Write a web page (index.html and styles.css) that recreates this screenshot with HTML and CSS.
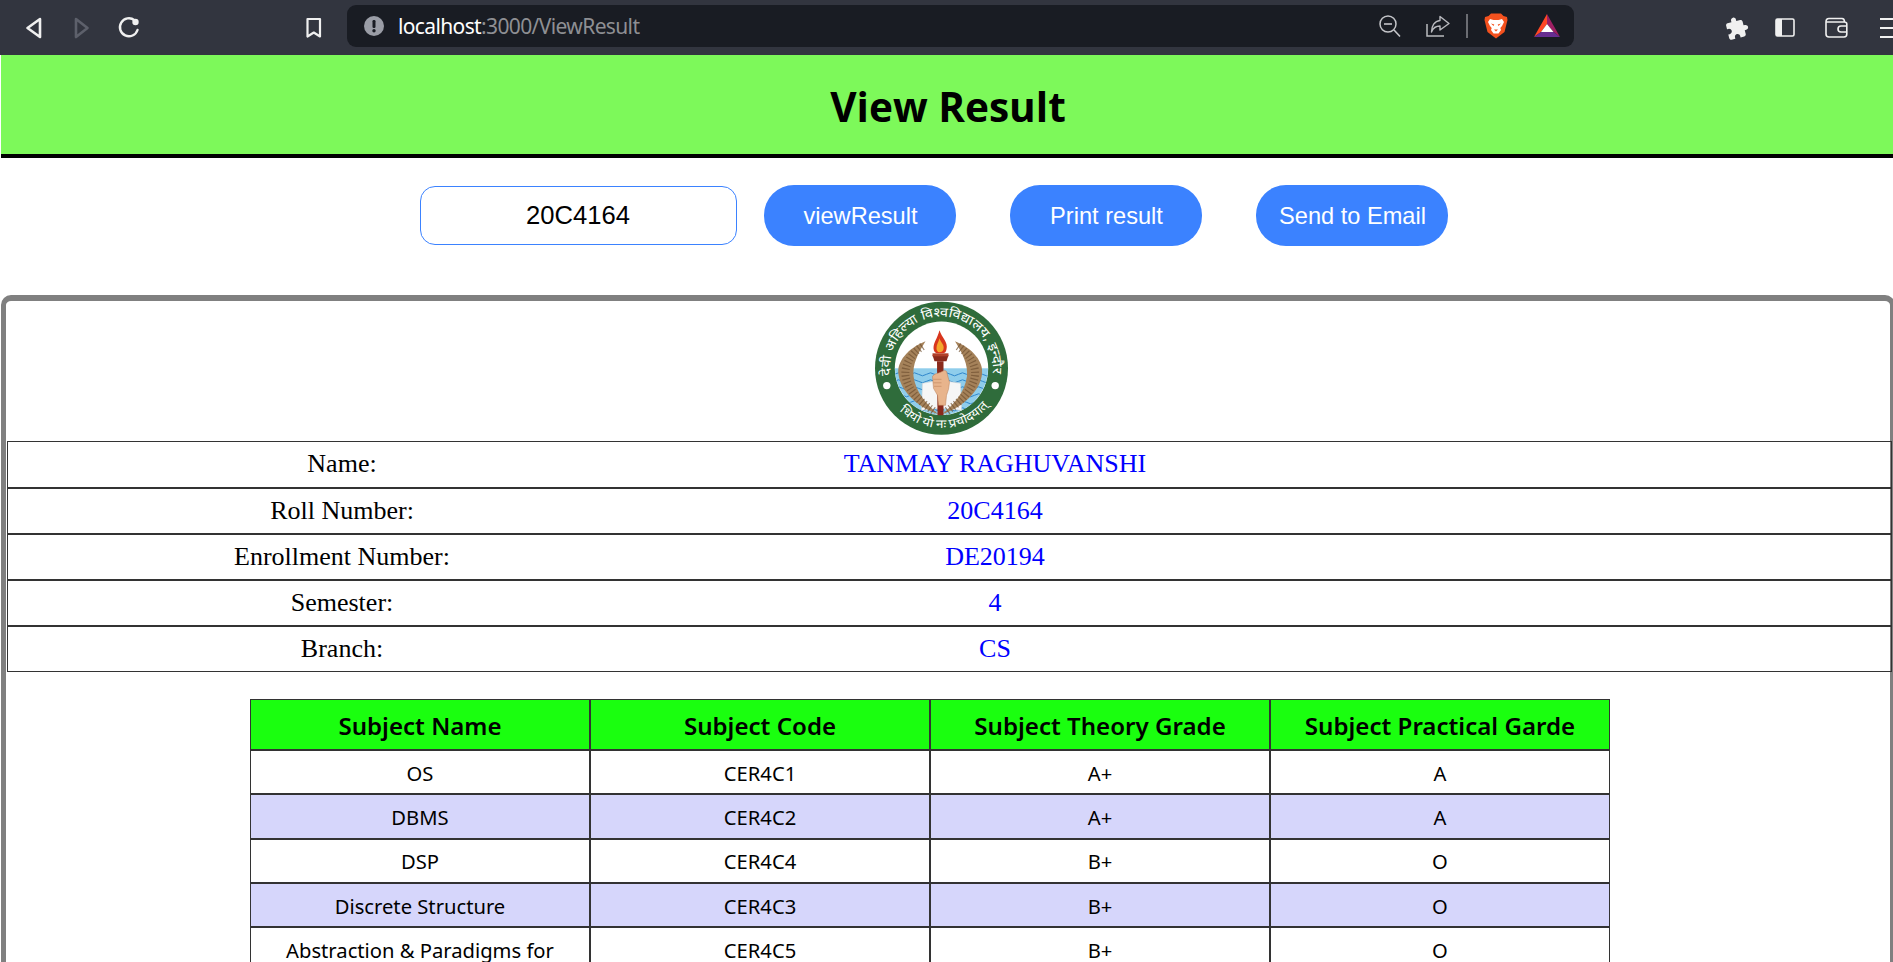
FILE: index.html
```html
<!DOCTYPE html>
<html lang="en">
<head>
<meta charset="utf-8">
<title>View Result</title>
<link rel="stylesheet" href="styles.css">
</head>
<body>
<div class="toolbar">
  <svg class="icon back" width="18" height="24" viewBox="0 0 18 24"><path d="M15 3 L2.500 12 L15 21 Z" fill="none" stroke="#f0f0f0" stroke-width="2.600" stroke-linejoin="round"/></svg>
  <svg class="icon forward" width="18" height="24" viewBox="0 0 18 24"><path d="M3 3 L14.500 12 L3 21 Z" fill="none" stroke="#5d606b" stroke-width="2.600" stroke-linejoin="round"/></svg>
  <svg class="icon reload" width="24" height="24" viewBox="0 0 24 24"><path d="M17.500 4.200 A9 9 0 1 0 20.500 14" fill="none" stroke="#f0f0f0" stroke-width="2.400" stroke-linecap="round"/><circle cx="18.500" cy="6" r="3.200" fill="#f0f0f0"/></svg>
  <svg class="icon bookmark" width="18" height="22" viewBox="0 0 18 22"><path d="M2.500 2 H15 V19.500 L8.800 15.500 L2.500 19.500 Z" fill="none" stroke="#f0f0f0" stroke-width="2.200" stroke-linejoin="round"/></svg>
  <div class="field">
    <svg class="icon alert" width="20" height="20" viewBox="0 0 20 20"><circle cx="10" cy="10" r="10" fill="#9a9da6"/><rect x="8.500" y="4" width="3" height="8" rx="1.200" fill="#191c23"/><circle cx="10" cy="14.700" r="1.700" fill="#191c23"/></svg>
    <span class="url"><span class="host">localhost</span>:3000/ViewResult</span>
    <svg class="icon zoom-out" width="24" height="24" viewBox="0 0 24 24"><circle cx="10" cy="10" r="8" fill="none" stroke="#c4c5c9" stroke-width="1.500"/><path d="M6 10 H14" stroke="#c4c5c9" stroke-width="1.600"/><path d="M16 16 L22 22.500" stroke="#c4c5c9" stroke-width="1.600"/></svg>
    <svg class="icon share" width="24" height="22" viewBox="0 0 24 22"><path d="M1 9 V21 H18" fill="none" stroke="#b9babf" stroke-width="1.500"/><path d="M14 1.500 L23 8.500 L14 15 V11 C10 11 7 13 5.500 17 C5.500 11 8.500 6 14 5.500 Z" fill="none" stroke="#b9babf" stroke-width="1.400" stroke-linejoin="round"/></svg>
    <span class="divider"></span>
    <svg class="icon brave" width="24" height="26" viewBox="0 0 24 26"><path d="M7 .5 H17 L19.500 3 L23 4 L23.500 7 L22.500 11 L20.500 19 L12 25.500 L3.500 19 L1.500 11 L.5 7 L1 4 L4.500 3 Z" fill="#f4511e"/><path d="M6 6 L9.500 7 H14.500 L18 6 L20 9 L18 13 L16.300 15 L17 17 L14.500 20.500 H9.500 L7 17 L7.700 15 L6 13 L4 9 Z" fill="#fff"/><path d="M7 10.500 L10.300 11.500 L9.500 13 Z M17 10.500 L13.700 11.500 L14.500 13 Z M10 16.500 H14 L12 18.500 Z" fill="#f4511e"/></svg>
    <svg class="icon bat" width="28" height="24" viewBox="0 0 28 24"><path d="M14 0 V10 L8 18 L1 23 Z" fill="#ff4724"/><path d="M14 0 L27 23 L20.500 18 L14 10 Z" fill="#9e1f63"/><path d="M1 23 L8 18 H20.500 L27 23 Z" fill="#662d91"/><path d="M14 10 L8 18 H20.500 Z" fill="#fff"/></svg>
  </div>
  <svg class="icon puzzle" width="24" height="24" viewBox="0 0 24 24"><path transform="rotate(-14 12 12)" d="M20.500 11H19V7c0-1.100-.9-2-2-2h-4V3.500C13 2.120 11.880 1 10.500 1S8 2.120 8 3.500V5H4c-1.100 0-1.990.9-1.990 2v3.800H3.500c1.490 0 2.700 1.210 2.700 2.700s-1.210 2.700-2.700 2.700H2V20c0 1.100.9 2 2 2h3.800v-1.500c0-1.490 1.210-2.700 2.700-2.700 1.490 0 2.700 1.210 2.700 2.700V22H17c1.100 0 2-.9 2-2v-4h1.500c1.380 0 2.500-1.120 2.500-2.500S21.880 11 20.500 11z" fill="#f0f0f0"/></svg>
  <svg class="icon panel" width="20" height="19" viewBox="0 0 20 19"><rect x="1" y="1" width="18" height="17" rx="1.500" fill="none" stroke="#f0f0f0" stroke-width="1.600"/><rect x="1" y="1" width="6" height="17" fill="#f0f0f0"/></svg>
  <svg class="icon wallet" width="24" height="21" viewBox="0 0 24 21"><path d="M2 5 C2 2.500 3 1.500 5 1.500 H18 C20 1.500 20.500 3 20.500 5 M2 5 V17 C2 19 3 20 5 20 H20 C22 20 22.800 19 22.800 17 V7 C22.800 5.500 22 5 20 5 H2" fill="none" stroke="#f0f0f0" stroke-width="1.600"/><path d="M23 9 H17 A3 3 0 0 0 17 15 H23" fill="none" stroke="#f0f0f0" stroke-width="1.600"/></svg>
  <div class="menu"><i></i><i></i><i></i></div>
</div>

<main class="page">
  <h1 class="title">View Result</h1>
  <div class="controls">
    <input class="roll" type="text" value="20C4164">
    <button class="btn">viewResult</button>
    <button class="btn">Print result</button>
    <button class="btn">Send to Email</button>
  </div>
  <section class="card">
    <svg class="logo" width="147" height="140" viewBox="0 0 147 140">
      <defs>
        <clipPath id="inner"><circle r="46.500"/></clipPath>
        <path id="arcTop" d="M-51 7 A51.500 51.500 0 1 1 51 7"/>
        <path id="arcBottom" d="M-42 42.400 A60 60 0 0 0 48 36"/>
        <g id="wreath">
          <path d="M-16 -27 C-34 -20 -45 -6 -43 6 C-41 22 -26 38 -3 46 C-14 37 -26 24 -28 8 C-29 -4 -24 -14 -16 -27 Z" fill="#a5825a"/>
          <path d="M-19 -22 C-31 -14 -37 -3 -36 7 C-34 22 -21 34 -6 44" fill="none" stroke="#6f5030" stroke-width="8" stroke-dasharray="1.200 2.300" opacity=".7"/>
        </g>
      </defs>
      <g transform="translate(66.500 67.300)">
        <circle r="66.500" fill="#2f6c3b"/>
        <circle r="46.700" fill="#fff"/>
        <g clip-path="url(#inner)">
          <rect x="-47" y="0" width="94" height="47" fill="#8fcdeb"/>
          <path d="M-47 6 q4 -3 8 0 t8 0 t8 0 t8 0 t8 0 t8 0 t8 0 t8 0 t8 0 t8 0 t8 0 t8 0 M-47 13 q4 -3 8 0 t8 0 t8 0 t8 0 t8 0 t8 0 t8 0 t8 0 t8 0 t8 0 t8 0 t8 0 M-47 20 q4 -3 8 0 t8 0 t8 0 t8 0 t8 0 t8 0 t8 0 t8 0 t8 0 t8 0 t8 0 t8 0 M-47 27 q4 -3 8 0 t8 0 t8 0 t8 0 t8 0 t8 0 t8 0 t8 0 t8 0 t8 0 t8 0 t8 0 M-47 34 q4 -3 8 0 t8 0 t8 0 t8 0 t8 0 t8 0 t8 0 t8 0 t8 0 t8 0 t8 0 t8 0 M-47 41 q4 -3 8 0 t8 0 t8 0 t8 0 t8 0 t8 0 t8 0 t8 0 t8 0 t8 0 t8 0 t8 0" fill="none" stroke="#2f86cb" stroke-width="1"/>
        </g>
        <path d="M-19 15 L-1 12 L19 15 L20 42 L-1 40 L-20 42 Z" fill="#f6f6f6" stroke="#d8d8d8" stroke-width=".6"/>
        <use href="#wreath"/>
        <use href="#wreath" transform="translate(-2.500 0) scale(-1 1)"/>
        <path d="M-4.500 -7 H2 L2 47 H-4 Z" fill="#8a2a1c"/>
        <path d="M-9 -13 H7 L5 -7 H-7 Z" fill="#8a2a1c"/>
        <path d="M-9 -15 H7 V-12 H-9 Z" fill="#b0402a"/>
        <path d="M-2 -38 C0 -31 7 -26 5 -19 C4.500 -16 3 -15 1 -15 H-4 C-6 -15 -8 -17 -8 -20 C-8 -26 -4 -30 -2 -38 Z" fill="#d8361d"/>
        <path d="M-2 -30 C-1 -26 3 -24 2 -19 C1.500 -17 0 -16 -2 -16 C-4 -16 -5 -18 -5 -20 C-5 -24 -3 -26 -2 -30 Z" fill="#f4a72c"/>
        <path d="M-9 8 C-7 5 -3 5 -1 4 L3 2 L5 3 L8 14 L7 21 L5 27 L4 37 H-3 L-4 27 L-8 20 Z" fill="#e8b48c" stroke="#b87d55" stroke-width=".5"/>
        <path d="M-8 11 H0 M-8 14.500 H0 M-7.500 18 H0" fill="none" stroke="#b87d55" stroke-width=".5"/>
        <circle cx="-54.700" cy="17.300" r="3.700" fill="#fff"/>
        <circle cx="53.700" cy="17.300" r="3.700" fill="#fff"/>
        <text class="logo-text"><textPath href="#arcTop" textLength="174" lengthAdjust="spacingAndGlyphs">देवी अहिल्या विश्वविद्यालय, इन्दौर</textPath></text>
        <text class="logo-text logo-motto"><textPath href="#arcBottom" textLength="100" lengthAdjust="spacingAndGlyphs">धियो यो नः प्रचोदयात्</textPath></text>
      </g>
    </svg>
    <table class="info">
      <colgroup><col class="info-label"><col class="info-value"><col></colgroup>
      <tbody>
        <tr><td>Name:</td><td class="val">TANMAY RAGHUVANSHI</td><td></td></tr>
        <tr><td>Roll Number:</td><td class="val">20C4164</td><td></td></tr>
        <tr><td>Enrollment Number:</td><td class="val">DE20194</td><td></td></tr>
        <tr><td>Semester:</td><td class="val">4</td><td></td></tr>
        <tr><td>Branch:</td><td class="val">CS</td><td></td></tr>
      </tbody>
    </table>
    <table class="subjects">
      <thead>
        <tr><th>Subject Name</th><th>Subject Code</th><th>Subject Theory Grade</th><th>Subject Practical Garde</th></tr>
      </thead>
      <tbody>
        <tr><td>OS</td><td>CER4C1</td><td>A+</td><td>A</td></tr>
        <tr><td>DBMS</td><td>CER4C2</td><td>A+</td><td>A</td></tr>
        <tr><td>DSP</td><td>CER4C4</td><td>B+</td><td>O</td></tr>
        <tr><td>Discrete Structure</td><td>CER4C3</td><td>B+</td><td>O</td></tr>
        <tr><td>Abstraction &amp; Paradigms for</td><td>CER4C5</td><td>B+</td><td>O</td></tr>
      </tbody>
    </table>
  </section>
</main>
</body>
</html>
```

FILE: styles.css
```css
* { box-sizing: content-box; }
html, body { margin: 0; height: 100%; overflow: hidden; background: #fff; }
body { font-family: "Liberation Sans", Arial, sans-serif; }

/* browser chrome */
.toolbar { display: flex; align-items: center; height: 55px; background: #32353f; overflow: hidden; }
.icon { display: block; flex: none; }
.back { margin-left: 25px; }
.forward { margin-left: 30px; }
.reload { margin-left: 26px; }
.bookmark { margin-left: 164px; }
.field { display: flex; align-items: center; width: 1227px; height: 42px; margin-left: 24px; margin-top: -3px; background: #191c23; border-radius: 9px; flex: none; }
.alert { margin-left: 17px; }
.url { margin-left: 14px; font-family: "Noto Sans", sans-serif; font-size: 21px; letter-spacing: -0.63px; color: #8e8f93; white-space: nowrap; }
.host { color: #fff; }
.zoom-out { margin-left: auto; }
.share { margin-left: 24px; }
.divider { width: 2px; height: 24px; margin-left: 16px; background: #6b6d73; }
.brave { margin-left: 16px; }
.bat { margin-left: 25px; margin-right: 13px; }
.puzzle { margin-left: 151px; }
.panel { margin-left: 26px; }
.wallet { margin-left: 29px; }
.menu { display: flex; flex-direction: column; gap: 7px; margin-left: 32px; width: 20px; flex: none; }
.menu i { display: block; height: 2px; background: #f0f0f0; }

/* page */
.page { padding-left: 1px; }
.title { margin: 0; height: 97px; padding: 2px 0 0 2px; line-height: 99px; text-align: center; font-family: "Open Sans", sans-serif; font-size: 40.6px; font-weight: 700; color: #000; background: #7df95a; border-bottom: 4px solid #000; }
.controls { display: flex; align-items: center; justify-content: center; padding: 27px 0 49px; }
.roll { width: 315px; height: 57px; padding: 0; margin: 0 27px 0 0; border: 1px solid #3b82ff; border-radius: 15px; font-family: "Liberation Sans", Arial, sans-serif; font-size: 25.6px; text-align: center; color: #000; background: #fff; outline: none; }
.btn { width: 190px; height: 59px; padding: 2px 0 0 2px; margin: 0 27px; border: 0; border-radius: 30px; font-family: "Liberation Sans", Arial, sans-serif; font-size: 23.6px; color: #fff; background: #3b82ff; }
.controls .btn:first-of-type { margin-left: 0; }
.card { width: 1884px; margin-right: -2px; height: 800px; border: 5px solid #808080; border-top-width: 6px; border-radius: 10px; }
.logo { display: block; margin: 0 auto; }

.info { width: 1883px; margin-left: 1px; table-layout: fixed; border-collapse: separate; border-spacing: 0; border: 1px solid #333; font-family: "Liberation Serif", "Times New Roman", serif; font-size: 26px; color: #000; }
.info-label { width: 668px; }
.info-value { width: 638px; }
.info td { height: 43px; padding: 0 0 1px; text-align: center; border-bottom: 2px solid #333; }
.info tr:first-child td { height: 44px; }
.info tr:last-child td { border-bottom: 0; }
.info .val { color: #00f; }

.subjects { width: 1358px; margin: 27px 0 0 244px; table-layout: fixed; border-collapse: separate; border-spacing: 0; border: 1px solid #333; font-family: "Noto Sans", sans-serif; color: #000; }
.subjects th, .subjects td { padding: 0; text-align: center; border-right: 2px solid #333; border-bottom: 2px solid #333; }
.subjects th:last-child, .subjects td:last-child { border-right: 0; }
.subjects th { height: 48px; padding-top: 1px; font-size: 24.1px; font-weight: 600; background: #1aff0f; }
.subjects th:nth-child(-n+3) { width: 338px; }
.subjects td { height: 41.33px; padding-top: 1px; font-size: 20.2px; }
.subjects tbody tr:nth-child(even) td { background: #d6d6fb; }

.logo-text { font-family: "Noto Sans", "DejaVu Sans", sans-serif; font-size: 13px; fill: #fff; }
.logo-motto { font-size: 12px; }
```
